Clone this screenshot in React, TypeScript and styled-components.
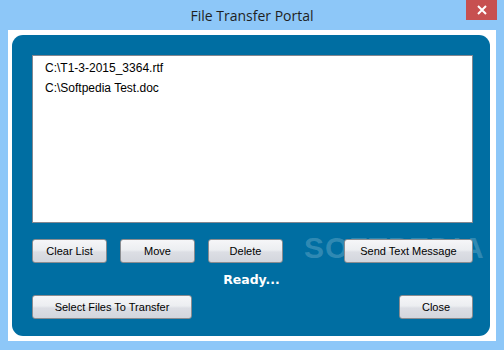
import styled, { createGlobalStyle } from "styled-components";

const GlobalStyle = createGlobalStyle`
  html, body {
    margin: 0;
    padding: 0;
    background: #8dc7f8;
  }
`;

const Window = styled.div`
  width: 504px;
  height: 350px;
  background: #8dc7f8;
  display: flex;
  flex-direction: column;
  box-sizing: border-box;
  position: relative;
  overflow: hidden;
`;

const TitleBar = styled.div`
  height: 30px;
  display: flex;
  align-items: center;
  justify-content: center;
  font-family: "Open Sans", "Noto Sans", sans-serif;
  font-size: 14px;
  color: #1f1f1f;
  padding-top: 1px;
  box-sizing: border-box;
`;

const CloseButton = styled.div`
  position: absolute;
  top: 0;
  left: 466px;
  width: 31px;
  height: 20px;
  background: #c75050;
  display: flex;
  align-items: center;
  justify-content: center;
`;

const Client = styled.div`
  margin: 0 8px 9px 8px;
  flex: 1;
  background: #ffffff;
  padding: 5px 6px 5px 4px;
  display: flex;
  box-sizing: border-box;
`;

const Panel = styled.div`
  flex: 1;
  background: #006ea2;
  border-radius: 11px;
  padding: 20px 17px 17px 20px;
  display: flex;
  flex-direction: column;
  position: relative;
  box-sizing: border-box;
`;

const FileList = styled.div`
  height: 168px;
  background: #ffffff;
  border: 1px solid #828790;
  box-sizing: border-box;
  padding: 2px 12px;
  font-family: "Liberation Sans", Arial, sans-serif;
  font-size: 12px;
  color: #000;
`;

const FileItem = styled.div`
  height: 20px;
  line-height: 20px;
`;

const ButtonRow = styled.div`
  display: flex;
  gap: 13px;
  margin-top: 16px;
  position: relative;
  z-index: 1;
`;

const Button = styled.div<{ $w: number; $push?: boolean }>`
  width: ${({ $w }) => $w}px;
  height: 24px;
  box-sizing: border-box;
  border: 1px solid #8a8c90;
  border-radius: 3px;
  background: linear-gradient(#f6f6f8 0%, #eceef1 45%, #dcdee4 55%, #d3d6dd 100%);
  display: flex;
  align-items: center;
  justify-content: center;
  font-family: "Liberation Sans", Arial, sans-serif;
  font-size: 11px;
  color: #000;
  margin-left: ${({ $push }) => ($push ? "auto" : "0")};
`;

const Status = styled.div`
  height: 32px;
  display: flex;
  align-items: center;
  justify-content: center;
  font-family: "DejaVu Sans", Verdana, sans-serif;
  font-weight: bold;
  font-size: 12.5px;
  color: #ffffff;
  padding-right: 2px;
  box-sizing: border-box;
`;

const BottomRow = styled.div`
  display: flex;
`;

const Watermark = styled.div`
  position: absolute;
  left: 292px;
  top: 196px;
  font-family: "Liberation Sans", Arial, sans-serif;
  font-weight: bold;
  font-size: 30px;
  letter-spacing: 1px;
  color: rgba(255, 255, 255, 0.2);
  z-index: 0;
  pointer-events: none;
`;

export default function App() {
  return (
    <>
      <GlobalStyle />
      <Window>
        <TitleBar>File Transfer Portal</TitleBar>
        <CloseButton>
          <svg width="10" height="10" viewBox="0 0 10 10">
            <path d="M1 1 L9 9 M9 1 L1 9" stroke="#ffffff" strokeWidth="2" />
          </svg>
        </CloseButton>
        <Client>
          <Panel>
            <FileList>
              <FileItem>C:\T1-3-2015_3364.rtf</FileItem>
              <FileItem>C:\Softpedia Test.doc</FileItem>
            </FileList>
            <Watermark>SOFTPEDIA</Watermark>
            <ButtonRow>
              <Button $w={75}>Clear List</Button>
              <Button $w={75}>Move</Button>
              <Button $w={75}>Delete</Button>
              <Button $w={129} $push>
                Send Text Message
              </Button>
            </ButtonRow>
            <Status>Ready...</Status>
            <BottomRow>
              <Button $w={160}>Select Files To Transfer</Button>
              <Button $w={74} $push>
                Close
              </Button>
            </BottomRow>
          </Panel>
        </Client>
      </Window>
    </>
  );
}
